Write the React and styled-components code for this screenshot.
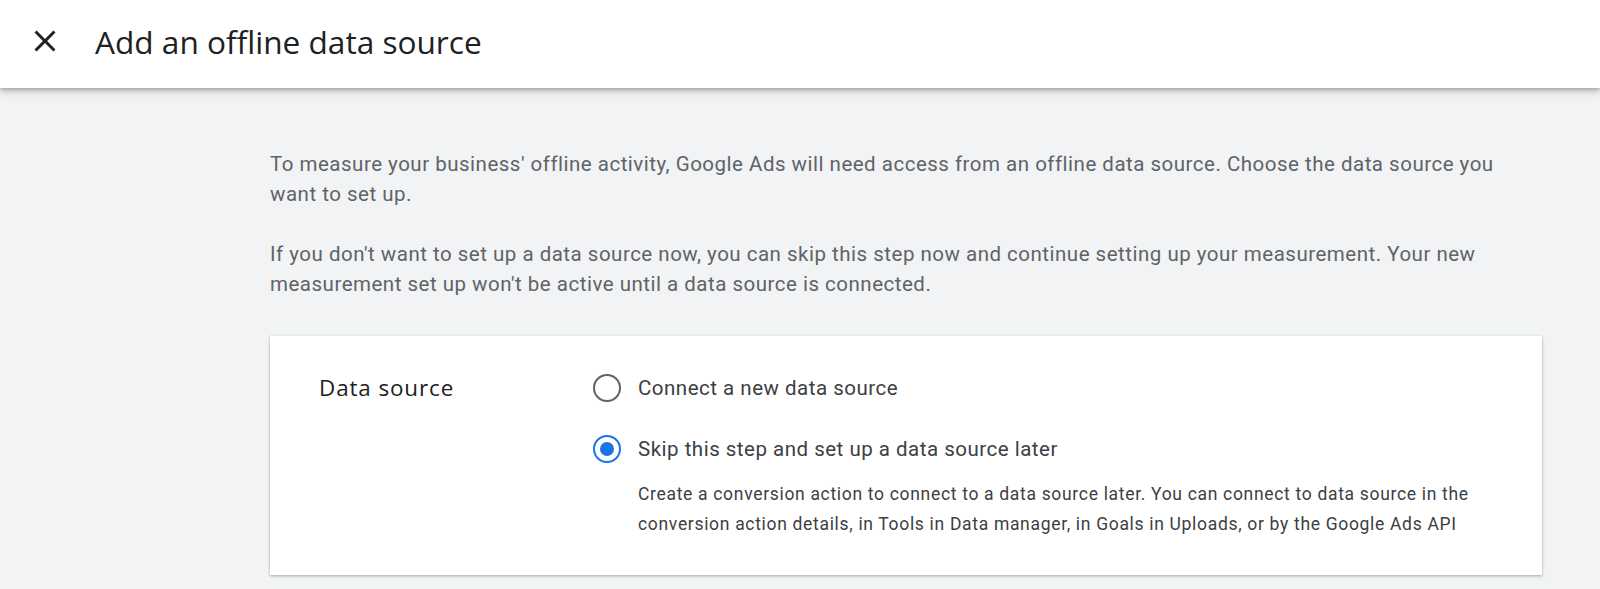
import React from "react";
import styled, { createGlobalStyle } from "styled-components";

const Global = createGlobalStyle`
  html, body { margin: 0; padding: 0; }
  body {
    background: #f1f3f4;
    font-family: Roboto, "Liberation Sans", sans-serif;
    -webkit-font-smoothing: antialiased;
  }
`;

const Page = styled.div`
  min-height: 589px;
  background: #f1f3f4;
  overflow: hidden;
`;

const Header = styled.header`
  height: 88px;
  box-sizing: border-box;
  padding: 0 0 6px 27px;
  background: #ffffff;
  display: flex;
  align-items: center;
  gap: 32px;
  box-shadow: 0 2px 4px rgba(0, 0, 0, 0.24), 0 4px 10px rgba(0, 0, 0, 0.14);
  position: relative;
  z-index: 1;
`;

const CloseButton = styled.button`
  width: 36px;
  height: 36px;
  padding: 0;
  border: 0;
  background: transparent;
  display: flex;
  align-items: center;
  justify-content: center;
  color: #202124;
  cursor: pointer;
`;

const Title = styled.h1`
  margin: 0;
  font-family: "Open Sans", Roboto, sans-serif;
  font-weight: 400;
  font-size: 31.6px;
  color: #202124;
`;

const Content = styled.main`
  margin-left: 270px;
  width: 1272px;
  padding-top: 61px;
`;

const Para = styled.p`
  margin: 0;
  font-size: 20.5px;
  line-height: 30px;
  letter-spacing: 0.5px;
  color: #5f6368;
  & + & {
    margin-top: 30px;
  }
`;

const Card = styled.section`
  margin-top: 37px;
  background: #ffffff;
  box-shadow: 0 1px 3px rgba(60, 64, 67, 0.3), 0 1px 2px rgba(60, 64, 67, 0.15);
  display: grid;
  grid-template-columns: 274px 1fr;
  padding: 38px 0 36px 49px;
`;

const FieldLabel = styled.div`
  font-family: "Open Sans", Roboto, sans-serif;
  font-size: 22.4px;
  letter-spacing: 0.9px;
  color: #202124;
  line-height: 28px;
`;

const Options = styled.div`
  display: flex;
  flex-direction: column;
  gap: 33px;
`;

const Option = styled.label`
  display: grid;
  grid-template-columns: 28px 1fr;
  column-gap: 17px;
  align-items: center;
  cursor: pointer;
`;

const Radio = styled.span`
  width: 28px;
  height: 28px;
  box-sizing: border-box;
  border-radius: 50%;
  border: 2.7px solid ${(p) => (p.$checked ? "#1a73e8" : "#5f6368")};
  display: flex;
  align-items: center;
  justify-content: center;
  &::after {
    content: "";
    width: 14px;
    height: 14px;
    border-radius: 50%;
    background: #1a73e8;
    display: ${(p) => (p.$checked ? "block" : "none")};
  }
`;

const OptionText = styled.span`
  font-size: 20.5px;
  line-height: 28px;
  letter-spacing: 0.5px;
  color: #3c4043;
`;

const Description = styled.p`
  grid-column: 2;
  margin: 17px 0 0;
  font-size: 17.5px;
  line-height: 29.5px;
  color: #3c4043;
  letter-spacing: 0.68px;
`;

function CloseIcon() {
  return (
    <svg width="36" height="36" viewBox="0 0 24 24" fill="currentColor">
      <path d="M19 6.41L17.59 5 12 10.59 6.41 5 5 6.41 10.59 12 5 17.59 6.41 19 12 13.41 17.59 19 19 17.59 13.41 12z" />
    </svg>
  );
}

export default function App() {
  const [value, setValue] = React.useState("later");
  return (
    <Page>
      <Global />
      <Header>
        <CloseButton aria-label="Close">
          <CloseIcon />
        </CloseButton>
        <Title>Add an offline data source</Title>
      </Header>
      <Content>
        <Para>
          To measure your business' offline activity, Google Ads will need access from an offline
          data source. Choose the data source you want to set up.
        </Para>
        <Para>
          If you don't want to set up a data source now, you can skip this step now and continue
          setting up your measurement. Your new measurement set up won't be active until a data
          source is connected.
        </Para>
        <Card>
          <FieldLabel>Data source</FieldLabel>
          <Options>
            <Option onClick={() => setValue("new")}>
              <Radio $checked={value === "new"} />
              <OptionText>Connect a new data source</OptionText>
            </Option>
            <Option onClick={() => setValue("later")}>
              <Radio $checked={value === "later"} />
              <OptionText>Skip this step and set up a data source later</OptionText>
              <Description>
                Create a conversion action to connect to a data source later. You can connect to
                data source in the conversion action details, in Tools in Data manager, in Goals in
                Uploads, or by the Google Ads API
              </Description>
            </Option>
          </Options>
        </Card>
      </Content>
    </Page>
  );
}
